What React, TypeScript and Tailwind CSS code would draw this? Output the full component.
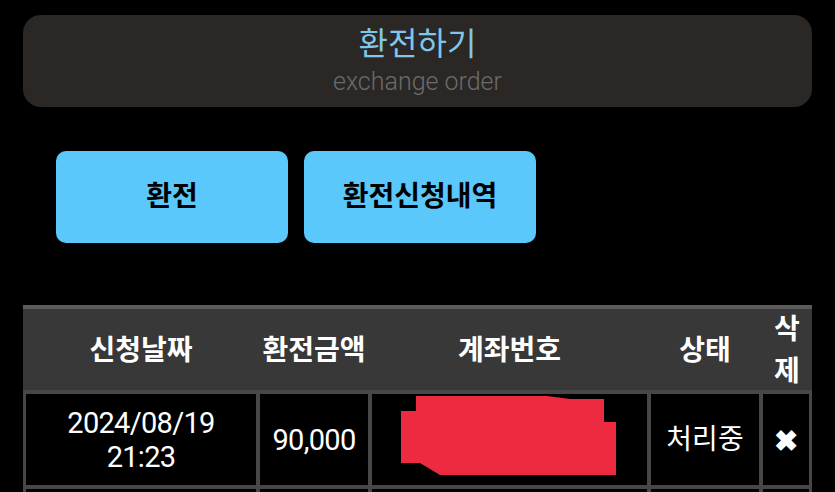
const cols = 'grid grid-cols-[230px_108px_275px_108px_46px] gap-x-[4px]';

function Redaction() {
  return (
    <svg width="216" height="80" viewBox="0 0 216 80" className="block">
      <polygon
        points="15,0 146,0 169,3 203,3 203,26 215,26 215,79 39,79 19,67 0,67 0,15 15,15"
        fill="#ee2a40"
      />
    </svg>
  );
}

export default function App() {
  return (
    <div
      className="min-h-screen bg-black px-[23px] pt-[15px] text-white"
      style={{ fontFamily: "Roboto, 'Noto Sans CJK KR', sans-serif" }}
    >
      <div className="flex h-[92px] flex-col items-center rounded-[18px] bg-[#2a2725] pt-[9px]">
        <div className="text-[32px] leading-[40px] text-[#7fc6ea]">환전하기</div>
        <div className="mt-[3px] text-[25px] font-light leading-[30px] text-[#6b6b6b]">exchange order</div>
      </div>

      <div className="mt-[44px] flex gap-4 pl-[33px]">
        <button className="h-[92px] w-[232px] rounded-[10px] bg-[#5ac8fb] text-[28px] font-bold text-black">환전</button>
        <button className="h-[92px] w-[232px] rounded-[10px] bg-[#5ac8fb] text-[28px] font-bold text-black">환전신청내역</button>
      </div>

      <div className="mt-[62px] w-[789px]">
        <div className={`${cols} h-[85px] items-center border-t-4 border-[#5b5b5b] bg-[#383838] px-[3px] text-center text-[28px] font-bold leading-[34px]`}>
          <div>신청날짜</div>
          <div>환전금액</div>
          <div>계좌번호</div>
          <div>상태</div>
          <div className="mx-auto w-[30px] pl-[2px] leading-[42px]">삭제</div>
        </div>
        <div className={`${cols} gap-y-[4px] bg-[#474747] p-[3px] pt-[4px] text-center text-[28px] leading-[34px]`}>
          <div className="flex h-[91px] flex-col items-center justify-center bg-black text-[29px] tracking-[-0.7px]">
            <div>2024/08/19</div>
            <div>21:23</div>
          </div>
          <div className="flex items-center justify-center bg-black text-[29px] tracking-[-0.7px]">90,000</div>
          <div className="flex items-start justify-start bg-black pt-[2px] pl-[29px]">
            <Redaction />
          </div>
          <div className="flex items-center justify-center bg-black">처리중</div>
          <div className="flex items-center justify-center bg-black pt-[2px] text-[29px] font-bold">✖</div>
          <div className="h-[40px] bg-black" />
          <div className="bg-black" />
          <div className="bg-black" />
          <div className="bg-black" />
          <div className="bg-black" />
        </div>
      </div>
    </div>
  );
}
